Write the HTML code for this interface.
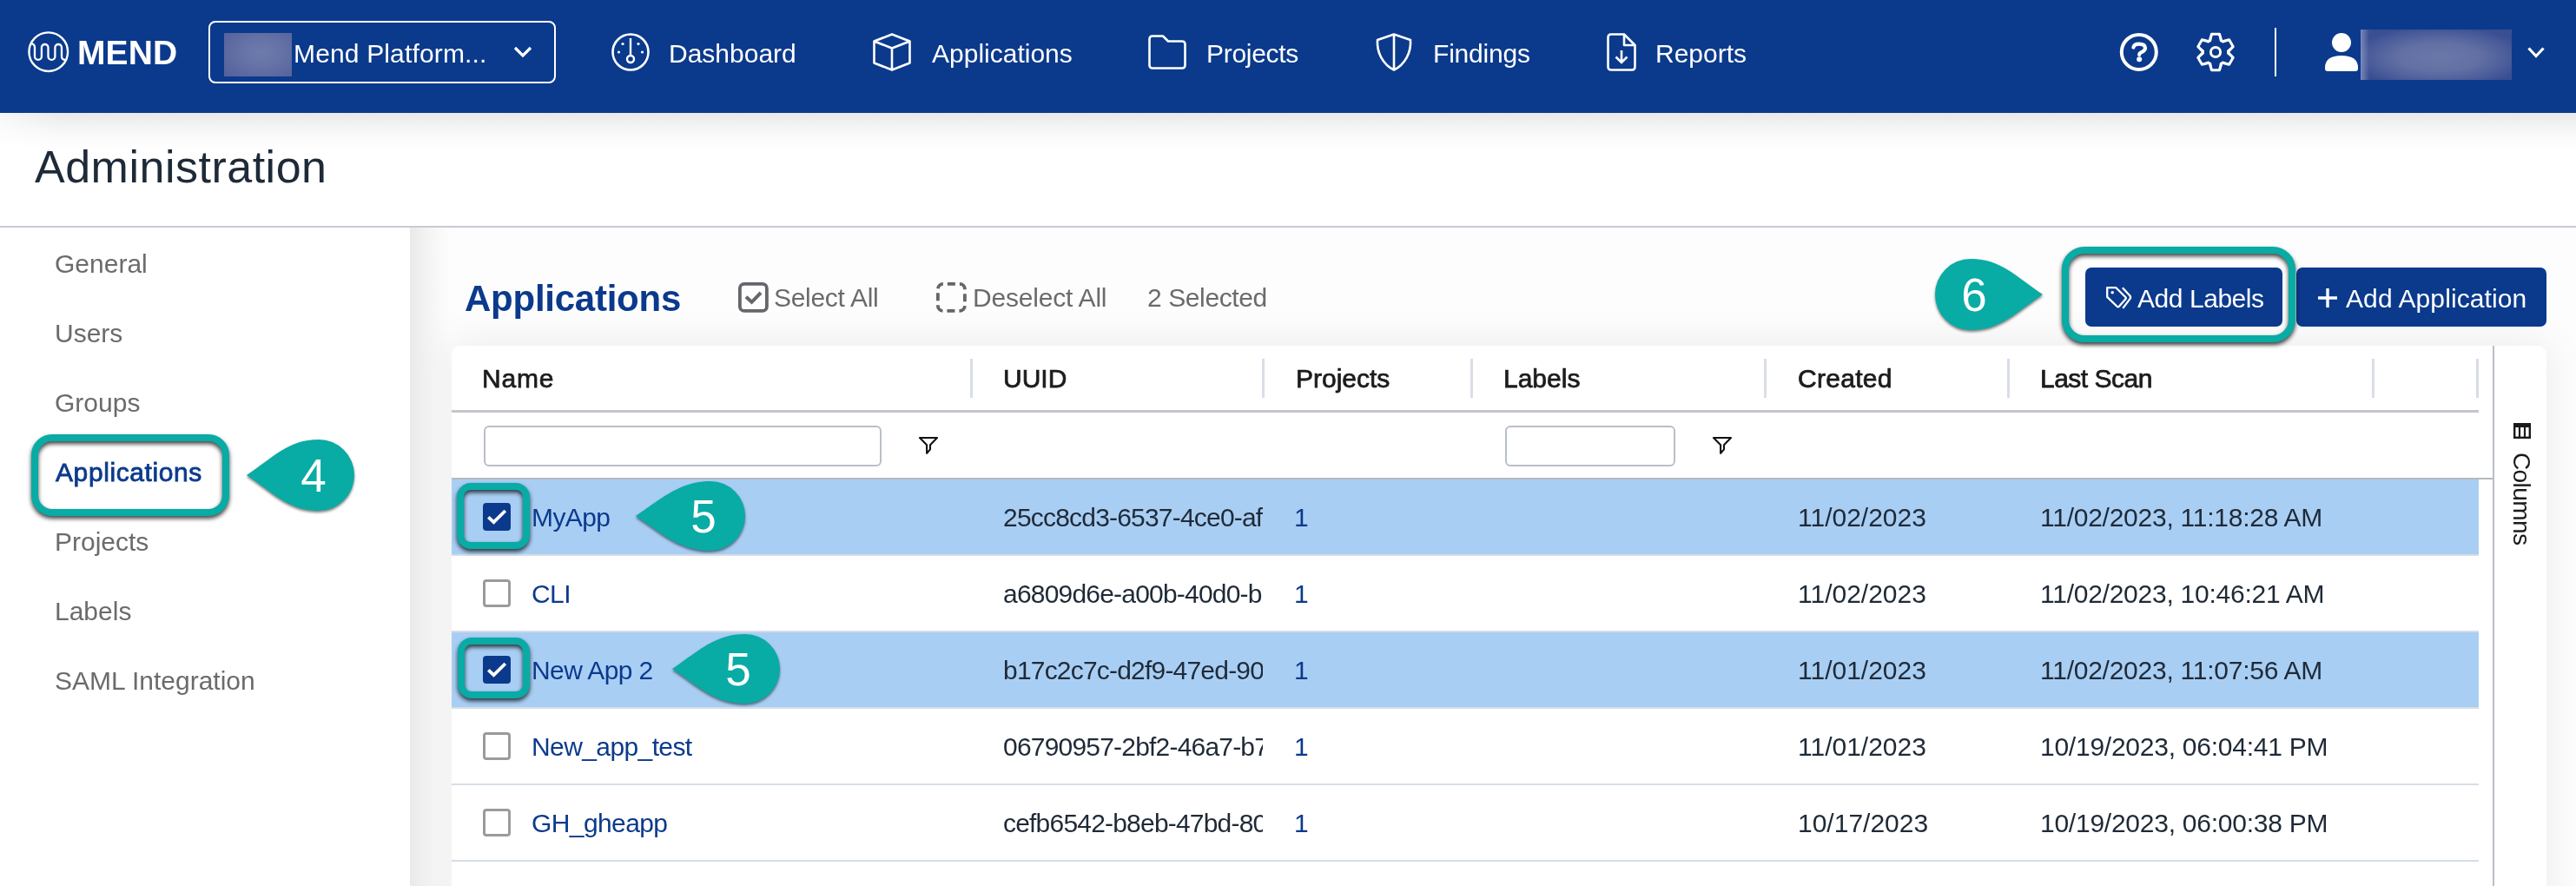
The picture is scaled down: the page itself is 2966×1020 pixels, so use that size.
<!DOCTYPE html>
<html><head><meta charset="utf-8">
<style>
*{box-sizing:border-box;margin:0;padding:0}
html,body{width:2966px;height:1020px;overflow:hidden;background:#fff;font-family:"Liberation Sans",sans-serif}
.a{position:absolute}
.t{position:absolute;line-height:1;white-space:nowrap;will-change:transform}
#hdr{position:absolute;left:0;top:0;width:2966px;height:130px;background:#0b3a8c;z-index:5}
.nav{color:#fff;font-size:30px}
svg{position:absolute;overflow:visible}
.th{font-size:30px;font-weight:400;color:#1c1c1c;-webkit-text-stroke:0.75px #1c1c1c}
.dv{top:413px;width:3px;height:45px;background:#d8dde6}
.inp{top:490px;height:47px;border:2px solid #b9bfc8;border-radius:6px;background:#fff}
.flt{top:501px;width:24px;height:24px}
.td{font-size:30px;color:#1f2a37}
.nm{color:#0b3a8c;letter-spacing:-0.6px}
.co{filter:drop-shadow(0 2px 1.5px rgba(0,0,0,0.5))}
.cn{font-size:53px;color:#fff}
.hb{border:8.5px solid #09aba5;filter:drop-shadow(0 3px 2.5px rgba(0,0,0,0.75))}
</style></head><body>

<!-- header shadow -->
<div class="a" style="left:0;top:130px;width:2966px;height:42px;background:linear-gradient(#e8e8e8,#f3f3f3 35%,#fafafa 65%,rgba(255,255,255,0));-webkit-mask-image:linear-gradient(90deg,rgba(0,0,0,0.35) 0,#000 70px)"></div>

<div id="hdr">
  <!-- logo -->
  <svg style="left:32px;top:36px" width="48" height="48" viewBox="0 0 48 48">
    <circle cx="23.75" cy="23.7" r="22.3" fill="none" stroke="#fff" stroke-width="2.4"/>
    <path d="M3.9 14.3 C6.5 14.3 8 16 8 18.8 L8 28.9 A3.95 3.95 0 0 0 15.9 28.9 L15.9 18.8 A3.8 3.8 0 0 1 23.5 18.8 L23.5 28.9 A3.95 3.95 0 0 0 31.4 28.9 L31.4 18.8 A3.8 3.8 0 0 1 39 18.8 L39 28.9 C39 31.5 41 32.7 43.1 32.9" fill="none" stroke="#fff" stroke-width="2.3"/>
  </svg>
  <div class="t" style="left:89px;top:41px;font-size:39px;font-weight:700;color:#fff;letter-spacing:0.1px">MEND</div>

  <!-- org dropdown -->
  <div class="a" style="left:240px;top:24px;width:400px;height:72px;border:2.5px solid #fff;border-radius:8px"></div>
  <div class="a" style="left:258px;top:38px;width:78px;height:50px;background:radial-gradient(ellipse 70% 75% at 55% 45%,#6d7bac 0%,#6472a6 45%,#55629c 100%)"></div>
  <div class="t nav" style="left:338px;top:47px;letter-spacing:0.15px">Mend Platform...</div>
  <svg style="left:591px;top:53px" width="22" height="14" viewBox="0 0 22 14"><path d="M2 2 L11 11 L20 2" fill="none" stroke="#fff" stroke-width="3.2"/></svg>

  <!-- Dashboard -->
  <svg style="left:704px;top:38px" width="44" height="44" viewBox="0 0 44 44">
    <circle cx="22" cy="22" r="20.5" fill="none" stroke="#fff" stroke-width="2.6"/>
    <line x1="22" y1="6" x2="22" y2="26" stroke="#fff" stroke-width="2.4"/>
    <circle cx="22" cy="30" r="4" fill="none" stroke="#fff" stroke-width="2.4"/>
    <circle cx="13" cy="12.5" r="1.6" fill="#fff"/><circle cx="31" cy="12.5" r="1.6" fill="#fff"/>
    <circle cx="8.5" cy="22" r="1.6" fill="#fff"/><circle cx="35.5" cy="22" r="1.6" fill="#fff"/>
  </svg>
  <div class="t nav" style="left:770px;top:47px">Dashboard</div>

  <!-- Applications -->
  <svg style="left:1005px;top:38px" width="44" height="44" viewBox="0 0 44 44">
    <path d="M22 1.5 L42.5 9.5 L42.5 34.5 L22 42.5 L1.5 34.5 L1.5 9.5 Z M1.5 9.5 L22 17.5 L42.5 9.5 M22 17.5 L22 42.5" fill="none" stroke="#fff" stroke-width="2.6" stroke-linejoin="round"/>
  </svg>
  <div class="t nav" style="left:1073px;top:47px">Applications</div>

  <!-- Projects -->
  <svg style="left:1322px;top:40px" width="44" height="40" viewBox="0 0 44 40">
    <path d="M5 1.5 L17 1.5 L23 7.5 L39 7.5 Q42.5 7.5 42.5 11 L42.5 35 Q42.5 38.5 39 38.5 L5 38.5 Q1.5 38.5 1.5 35 L1.5 5 Q1.5 1.5 5 1.5 Z" fill="none" stroke="#fff" stroke-width="2.6" stroke-linejoin="round"/>
  </svg>
  <div class="t nav" style="left:1389px;top:47px;letter-spacing:-0.3px">Projects</div>

  <!-- Findings -->
  <svg style="left:1584px;top:38px" width="42" height="44" viewBox="0 0 42 44">
    <path d="M21 1.5 L40 8 C41 22 34 36 21 42.5 C8 36 1 22 2 8 Z M21 1.5 L21 42.5" fill="none" stroke="#fff" stroke-width="2.6" stroke-linejoin="round"/>
  </svg>
  <div class="t nav" style="left:1650px;top:47px;letter-spacing:-0.2px">Findings</div>

  <!-- Reports -->
  <svg style="left:1850px;top:38px" width="34" height="44" viewBox="0 0 34 44">
    <path d="M5 1.5 L20 1.5 L32.5 14 L32.5 39 Q32.5 42.5 29 42.5 L5 42.5 Q1.5 42.5 1.5 39 L1.5 5 Q1.5 1.5 5 1.5 Z M20 1.5 L20 14 L32.5 14" fill="none" stroke="#fff" stroke-width="2.6" stroke-linejoin="round"/>
    <path d="M17 20 L17 34 M10.5 27.5 L17 34 L23.5 27.5" fill="none" stroke="#fff" stroke-width="2.6"/>
  </svg>
  <div class="t nav" style="left:1906px;top:47px">Reports</div>

  <!-- help -->
  <svg style="left:2441px;top:38px" width="44" height="44" viewBox="0 0 44 44">
    <circle cx="21.8" cy="21.9" r="20" fill="none" stroke="#fff" stroke-width="4"/>
    <path d="M15.4 16.5 Q16.4 12.6 22 12.6 Q29 12.6 29 17.3 Q29 20 25.2 21.9 Q22.2 23.3 22.2 25" fill="none" stroke="#fff" stroke-width="4.2" stroke-linecap="round"/>
    <circle cx="22.2" cy="30.3" r="3" fill="#fff"/>
  </svg>
  <!-- gear -->
  <svg style="left:2530px;top:38px" width="42" height="44" viewBox="-21 -22 42 44">
    <g fill="#fff" stroke="#fff" stroke-width="3" stroke-linejoin="round"><circle r="14.4"/><polygon points="-6.8,-13 -4.6,-20.7 4.6,-20.7 6.8,-13" transform="rotate(0)"/><polygon points="-6.8,-13 -4.6,-20.7 4.6,-20.7 6.8,-13" transform="rotate(60)"/><polygon points="-6.8,-13 -4.6,-20.7 4.6,-20.7 6.8,-13" transform="rotate(120)"/><polygon points="-6.8,-13 -4.6,-20.7 4.6,-20.7 6.8,-13" transform="rotate(180)"/><polygon points="-6.8,-13 -4.6,-20.7 4.6,-20.7 6.8,-13" transform="rotate(240)"/><polygon points="-6.8,-13 -4.6,-20.7 4.6,-20.7 6.8,-13" transform="rotate(300)"/></g>
    <g fill="#0b3a8c" stroke="#0b3a8c" stroke-width="2" stroke-linejoin="round"><circle r="12.2"/><polygon points="-4.2,-11 -2.6,-18.2 2.6,-18.2 4.2,-11" transform="rotate(0)"/><polygon points="-4.2,-11 -2.6,-18.2 2.6,-18.2 4.2,-11" transform="rotate(60)"/><polygon points="-4.2,-11 -2.6,-18.2 2.6,-18.2 4.2,-11" transform="rotate(120)"/><polygon points="-4.2,-11 -2.6,-18.2 2.6,-18.2 4.2,-11" transform="rotate(180)"/><polygon points="-4.2,-11 -2.6,-18.2 2.6,-18.2 4.2,-11" transform="rotate(240)"/><polygon points="-4.2,-11 -2.6,-18.2 2.6,-18.2 4.2,-11" transform="rotate(300)"/></g>
    <circle cx="0" cy="0" r="5.6" fill="none" stroke="#fff" stroke-width="3"/>
  </svg>
  <div class="a" style="left:2619px;top:32px;width:2px;height:56px;background:#fff"></div>
  <!-- person -->
  <svg style="left:2677px;top:38px" width="38" height="44" viewBox="0 0 38 44">
    <circle cx="19" cy="11" r="11" fill="#fff"/>
    <path d="M0 40 Q0 26 19 26 Q38 26 38 40 L38 41 Q38 44 35 44 L3 44 Q0 44 0 41 Z" fill="#fff"/>
  </svg>
  <div class="a" style="left:2718px;top:34px;width:174px;height:58px;background:linear-gradient(90deg,rgba(150,160,200,0.7),rgba(150,160,200,0) 10px),radial-gradient(ellipse 58% 62% at 52% 55%,#6a77a8 0%,#6370a4 45%,#4a5c9a 80%,#3a4e92 100%)"></div>
  <svg style="left:2910px;top:54px" width="20" height="13" viewBox="0 0 20 13"><path d="M1.5 1.5 L10 10.5 L18.5 1.5" fill="none" stroke="#fff" stroke-width="3.2"/></svg>
</div>

<!-- title area -->
<div class="t" style="left:40px;top:166px;font-size:52px;letter-spacing:0.5px;color:#1e2a38">Administration</div>
<div class="a" style="left:0;top:260px;width:2966px;height:2px;background:#c6cbd1"></div>

<!-- sidebar -->
<div class="a" style="left:0;top:262px;width:472px;height:758px;background:#fff"></div>
<div class="t" style="left:63px;top:289px;font-size:30px;color:#6b6b6b">General</div>
<div class="t" style="left:63px;top:369px;font-size:30px;color:#6b6b6b">Users</div>
<div class="t" style="left:63px;top:449px;font-size:30px;color:#6b6b6b">Groups</div>
<div class="t" style="left:64px;top:529px;font-size:30px;color:#0b3a8c;font-weight:400;-webkit-text-stroke:0.8px #0b3a8c;letter-spacing:0.6px">Applications</div>
<div class="t" style="left:63px;top:609px;font-size:30px;color:#6b6b6b">Projects</div>
<div class="t" style="left:63px;top:689px;font-size:30px;color:#6b6b6b">Labels</div>
<div class="t" style="left:63px;top:769px;font-size:30px;color:#6b6b6b">SAML Integration</div>

<!-- main -->
<div class="a" style="left:472px;top:262px;width:2494px;height:758px;background:#fdfdfd;overflow:hidden">
  <div class="a" style="left:48px;top:136px;width:2412px;height:700px;border-radius:10px;box-shadow:0 0 45px 5px rgba(0,0,0,0.065)"></div>
  <div class="a" style="left:0;top:0;width:48px;height:758px;background:linear-gradient(90deg,rgba(0,0,0,0.08),rgba(0,0,0,0.025) 60%,rgba(0,0,0,0))"></div>
</div>


<!-- main top content -->
<div class="t" style="left:535px;top:323px;font-size:42px;font-weight:700;letter-spacing:-0.25px;color:#0b3a8c">Applications</div>
<svg style="left:850px;top:324.5px" width="35" height="35" viewBox="0 0 35 35">
  <rect x="1.9" y="1.9" width="31" height="31" rx="5" fill="none" stroke="#64666b" stroke-width="3.8"/>
  <path d="M9 16.8 L15.5 22.8 L26 12" fill="none" stroke="#64666b" stroke-width="4"/>
</svg>
<div class="t" style="left:891px;top:328px;font-size:30px;letter-spacing:-0.3px;color:#6b6b6b">Select All</div>
<svg style="left:1078px;top:324.5px" width="35" height="35" viewBox="0 0 35 35">
  <rect x="1.9" y="1.9" width="31" height="31" rx="6" fill="none" stroke="#64666b" stroke-width="3.8" stroke-dasharray="9 5 9.42 5" stroke-dashoffset="23.42"/>
</svg>
<div class="t" style="left:1120px;top:328px;font-size:30px;letter-spacing:-0.2px;color:#6b6b6b">Deselect All</div>
<div class="t" style="left:1321px;top:328px;font-size:30px;letter-spacing:-0.4px;color:#6b6b6b">2 Selected</div>

<!-- buttons -->
<div class="a" style="left:2401px;top:308px;width:227px;height:68px;background:#0b3a8c;border-radius:7px"></div>
<svg style="left:2421px;top:326px" width="35" height="35" viewBox="0 0 35 35">
  <path d="M5.2 5.2 H15.4 L26.2 16 Q27.4 17.2 26.2 18.4 L18.9 26.8 Q17.7 28 16.5 26.8 L5.2 15.9 Z" fill="none" stroke="#fff" stroke-width="2.3" stroke-linejoin="round"/>
  <path d="M22.9 5.2 L31.4 14.5 Q32.8 16.3 31.4 18.1 L23.3 28.9" fill="none" stroke="#fff" stroke-width="2.3"/>
  <circle cx="11.2" cy="10.8" r="1.8" fill="#fff"/>
</svg>
<div class="t" style="left:2461px;top:329px;font-size:30px;letter-spacing:-0.45px;color:#fff">Add Labels</div>
<div class="a" style="left:2644px;top:308px;width:288px;height:68px;background:#0b3a8c;border-radius:7px"></div>
<svg style="left:2668px;top:331px" width="24" height="24" viewBox="0 0 24 24"><path d="M12 1 L12 23 M1 12 L23 12" stroke="#fff" stroke-width="3.4"/></svg>
<div class="t" style="left:2701px;top:329px;font-size:30px;letter-spacing:0.1px;color:#fff">Add Application</div>

<!-- table card -->
<div class="a" style="left:520px;top:398px;width:2412px;height:640px;background:#fff;border-radius:10px 10px 0 0"></div>
<div class="a" style="left:2870px;top:398px;width:2px;height:622px;background:#b9bfc7"></div>
<!-- header -->
<div class="t th" style="left:555px;top:421px;letter-spacing:0.8px">Name</div>
<div class="t th" style="left:1155px;top:421px">UUID</div>
<div class="t th" style="left:1492px;top:421px">Projects</div>
<div class="t th" style="left:1731px;top:421px">Labels</div>
<div class="t th" style="left:2070px;top:421px;letter-spacing:0.3px">Created</div>
<div class="t th" style="left:2349px;top:421px;letter-spacing:-0.5px">Last Scan</div>
<div class="a dv" style="left:1117px"></div>
<div class="a dv" style="left:1453px"></div>
<div class="a dv" style="left:1693px"></div>
<div class="a dv" style="left:2031px"></div>
<div class="a dv" style="left:2311px"></div>
<div class="a dv" style="left:2731px"></div>
<div class="a dv" style="left:2851px"></div>
<div class="a" style="left:520px;top:472px;width:2334px;height:3px;background:#c3c7cd"></div>
<!-- filter row -->
<div class="a inp" style="left:557px;width:458px"></div>
<svg class="flt" style="left:1057px"><path d="M2 3 L22 3 L14 11.2 L14 16.4 L10.1 20.8 L10.1 11.2 Z" fill="none" stroke="#111" stroke-width="2.1" stroke-linejoin="round"/></svg>
<div class="a inp" style="left:1733px;width:196px"></div>
<svg class="flt" style="left:1971px"><path d="M2 3 L22 3 L14 11.2 L14 16.4 L10.1 20.8 L10.1 11.2 Z" fill="none" stroke="#111" stroke-width="2.1" stroke-linejoin="round"/></svg>
<div class="a" style="left:520px;top:550px;width:2351px;height:2px;background:#b5b9be"></div>
<div class="a" style="left:520px;top:552px;width:2334px;height:86px;background:#a9cef4"></div>
<div class="a" style="left:520px;top:638px;width:2334px;height:2px;background:#d6dde7"></div>
<svg style="left:556px;top:579px" width="32" height="32" viewBox="0 0 32 32"><rect width="32" height="32" rx="4" fill="#0b3a8c"/><path d="M6.3 16.3 L12.5 22.2 L25.8 9" fill="none" stroke="#fff" stroke-width="3.8"/></svg>
<div class="t td nm" style="left:612px;top:581px">MyApp</div>
<div class="a" style="left:1155px;top:576px;width:299px;height:40px;overflow:hidden"><div class="t td" style="left:0;top:5px;letter-spacing:-0.8px">25cc8cd3-6537-4ce0-af12</div></div>
<div class="t td nm" style="left:1490px;top:581px">1</div>
<div class="t td" style="left:2070px;top:581px">11/02/2023</div>
<div class="t td" style="left:2349px;letter-spacing:-0.25px;top:581px">11/02/2023, 11:18:28 AM</div>
<div class="a" style="left:520px;top:640px;width:2334px;height:86px;background:#fff"></div>
<div class="a" style="left:520px;top:726px;width:2334px;height:2px;background:#d6dde7"></div>
<div class="a" style="left:556px;top:667px;width:32px;height:32px;border:3px solid #9b9b9b;border-radius:4px;background:#fff"></div>
<div class="t td nm" style="left:612px;top:669px">CLI</div>
<div class="a" style="left:1155px;top:664px;width:299px;height:40px;overflow:hidden"><div class="t td" style="left:0;top:5px;letter-spacing:-0.8px">a6809d6e-a00b-40d0-b123</div></div>
<div class="t td nm" style="left:1490px;top:669px">1</div>
<div class="t td" style="left:2070px;top:669px">11/02/2023</div>
<div class="t td" style="left:2349px;letter-spacing:-0.25px;top:669px">11/02/2023, 10:46:21 AM</div>
<div class="a" style="left:520px;top:728px;width:2334px;height:86px;background:#a9cef4"></div>
<div class="a" style="left:520px;top:814px;width:2334px;height:2px;background:#d6dde7"></div>
<svg style="left:556px;top:755px" width="32" height="32" viewBox="0 0 32 32"><rect width="32" height="32" rx="4" fill="#0b3a8c"/><path d="M6.3 16.3 L12.5 22.2 L25.8 9" fill="none" stroke="#fff" stroke-width="3.8"/></svg>
<div class="t td nm" style="left:612px;top:757px">New App 2</div>
<div class="a" style="left:1155px;top:752px;width:299px;height:40px;overflow:hidden"><div class="t td" style="left:0;top:5px;letter-spacing:-0.8px">b17c2c7c-d2f9-47ed-90a1</div></div>
<div class="t td nm" style="left:1490px;top:757px">1</div>
<div class="t td" style="left:2070px;top:757px">11/01/2023</div>
<div class="t td" style="left:2349px;letter-spacing:-0.25px;top:757px">11/02/2023, 11:07:56 AM</div>
<div class="a" style="left:520px;top:816px;width:2334px;height:86px;background:#fff"></div>
<div class="a" style="left:520px;top:902px;width:2334px;height:2px;background:#d6dde7"></div>
<div class="a" style="left:556px;top:843px;width:32px;height:32px;border:3px solid #9b9b9b;border-radius:4px;background:#fff"></div>
<div class="t td nm" style="left:612px;top:845px">New_app_test</div>
<div class="a" style="left:1155px;top:840px;width:299px;height:40px;overflow:hidden"><div class="t td" style="left:0;top:5px;letter-spacing:-0.8px">06790957-2bf2-46a7-b712</div></div>
<div class="t td nm" style="left:1490px;top:845px">1</div>
<div class="t td" style="left:2070px;top:845px">11/01/2023</div>
<div class="t td" style="left:2349px;letter-spacing:-0.25px;top:845px">10/19/2023, 06:04:41 PM</div>
<div class="a" style="left:520px;top:904px;width:2334px;height:86px;background:#fff"></div>
<div class="a" style="left:520px;top:990px;width:2334px;height:2px;background:#d6dde7"></div>
<div class="a" style="left:556px;top:931px;width:32px;height:32px;border:3px solid #9b9b9b;border-radius:4px;background:#fff"></div>
<div class="t td nm" style="left:612px;top:933px">GH_gheapp</div>
<div class="a" style="left:1155px;top:928px;width:299px;height:40px;overflow:hidden"><div class="t td" style="left:0;top:5px;letter-spacing:-0.8px">cefb6542-b8eb-47bd-80c1</div></div>
<div class="t td nm" style="left:1490px;top:933px">1</div>
<div class="t td" style="left:2070px;top:933px">10/17/2023</div>
<div class="t td" style="left:2349px;letter-spacing:-0.25px;top:933px">10/19/2023, 06:00:38 PM</div>

<!-- columns panel -->
<svg style="left:2894px;top:487px" width="20" height="18" viewBox="0 0 20 18">
  <rect x="1.2" y="1.5" width="17.6" height="15.3" fill="none" stroke="#1a1a1a" stroke-width="2.4"/>
  <rect x="0" y="0" width="20" height="5" fill="#1a1a1a"/>
  <path d="M7 3 L7 17 M13 3 L13 17" stroke="#1a1a1a" stroke-width="2.2"/>
</svg>
<div class="t" style="left:2889px;top:521px;font-size:28px;color:#1a1a1a;writing-mode:vertical-rl;letter-spacing:-0.6px">Columns</div>

<!-- annotations -->
<div class="a hb" style="left:36px;top:500px;width:228px;height:94px;border-radius:24px"></div>
<svg class="co" style="left:279px;top:501px" width="134" height="95"><path d="M5.0 46.0 C35.0 26.0 53.0 5.0 88.0 5.0 A41.0 41.0 0 0 1 88.0 87.0 C53.0 87.0 35.0 66.0 5.0 46.0 Z" fill="#09aba5"/></svg>
<div class="t cn" style="left:321px;top:521px;width:80px;text-align:center">4</div>
<div class="a hb" style="left:526px;top:556px;width:84px;height:76px;border-radius:16px"></div>
<svg class="co" style="left:727px;top:549px" width="136" height="93"><path d="M5.0 45.0 C35.0 25.0 56.0 5.0 91.0 5.0 A40.0 40.0 0 0 1 91.0 85.0 C56.0 85.0 35.0 65.0 5.0 45.0 Z" fill="#09aba5"/></svg>
<div class="t cn" style="left:770px;top:568px;width:80px;text-align:center">5</div>
<div class="a hb" style="left:527px;top:734px;width:83px;height:70px;border-radius:16px"></div>
<svg class="co" style="left:769px;top:725px" width="134" height="93"><path d="M5.0 45.0 C35.0 25.0 54.0 5.0 89.0 5.0 A40.0 40.0 0 0 1 89.0 85.0 C54.0 85.0 35.0 65.0 5.0 45.0 Z" fill="#09aba5"/></svg>
<div class="t cn" style="left:810px;top:744px;width:80px;text-align:center">5</div>
<div class="a hb" style="left:2374px;top:284px;width:269px;height:110px;border-radius:26px"></div>
<svg class="co" style="left:2223px;top:293px" width="134" height="95"><path d="M129.0 46.0 C99.0 26.0 81.0 5.0 46.0 5.0 A41.0 41.0 0 0 0 46.0 87.0 C81.0 87.0 99.0 66.0 129.0 46.0 Z" fill="#09aba5"/></svg>
<div class="t cn" style="left:2233px;top:313px;width:80px;text-align:center">6</div>
</body></html>
